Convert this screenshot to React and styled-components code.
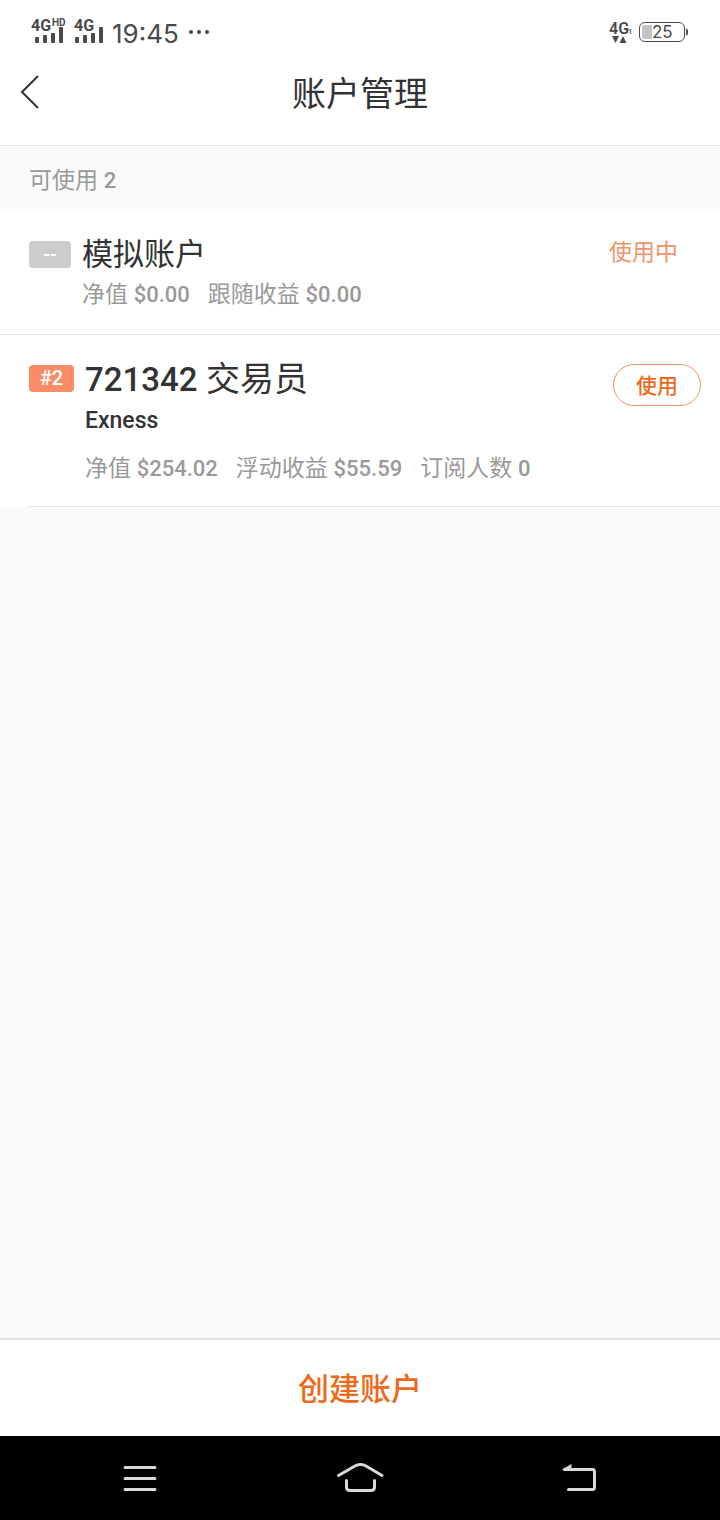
import React from 'react';
import styled, { createGlobalStyle } from 'styled-components';

const colors = {
  text: '#333333',
  muted: '#999999',
  status: '#4a4a4a',
  primary: '#ee6a1b',
  primarySoft: '#f0936c',
  badge: '#fb8c68',
  badgeMuted: '#cccccc',
  page: '#fafafa',
  line: '#e2e3e5',
  nav: '#d9d9d9',
};

const GlobalStyle = createGlobalStyle`
  * {
    box-sizing: border-box;
  }

  body {
    margin: 0;
    color: ${colors.text};
    background: ${colors.page};
    font-family: Roboto, 'Noto Sans CJK SC', sans-serif;
  }

  h1, h2, p {
    margin: 0;
    font-weight: 400;
  }

  button {
    padding: 0;
    border: 0;
    background: none;
    font-family: inherit;
    cursor: pointer;
  }

  svg {
    display: block;
  }
`;

const Screen = styled.div`
  display: flex;
  flex-direction: column;
  min-height: 100vh;
`;

const StatusBar = styled.div`
  display: flex;
  align-items: center;
  justify-content: space-between;
  height: 64px;
  padding: 0 31px;
  background: #fff;
`;

const StatusGroup = styled.div`
  display: flex;
  align-items: center;
  gap: ${({ $tight }) => ($tight ? '4px' : '8px')};
`;

const Clock = styled.span`
  font-family: Inter, sans-serif;
  font-size: 26px;
  line-height: 32px;
  padding-top: 4px;
  color: ${colors.status};
`;

const Header = styled.header`
  display: grid;
  grid-template-columns: 60px 1fr 60px;
  align-items: center;
  height: 82px;
  padding-bottom: 26px;
  border-bottom: 1px solid ${colors.line};
  background: #fff;
`;

const BackButton = styled.button`
  padding-left: 19px;
`;

const Title = styled.h1`
  padding-top: 4px;
  font-size: 34px;
  line-height: 48px;
  text-align: center;
`;

const Content = styled.main`
  flex: 1;
`;

const SectionLabel = styled.h2`
  padding: 18px 29px 14px;
  font-size: 23px;
  line-height: 33px;
  color: ${colors.muted};
`;

const Num = styled.span`
  font-size: 22px;
  font-weight: 500;
`;

const Account = styled.section`
  display: flex;
  align-items: flex-start;
  gap: 11px;
  padding: 24px 19px ${({ $compact }) => ($compact ? '18px' : '20px')} 29px;
  background: #fff;
`;

const Divider = styled.div`
  height: 1px;
  background: #fff;

  &::after {
    content: '';
    display: block;
    height: 1px;
    margin-left: ${({ $inset }) => ($inset ? '29px' : '0')};
    background: ${colors.line};
  }
`;

const Badge = styled.span`
  min-width: ${({ $muted }) => ($muted ? '42px' : '45px')};
  margin-top: 6px;
  border-radius: 4px;
  background: ${({ $muted }) => ($muted ? colors.badgeMuted : colors.badge)};
  color: #fff;
  font-size: 20px;
  font-weight: 500;
  line-height: 27px;
  text-align: center;
`;

const Info = styled.div`
  flex: 1;
`;

const Name = styled.p`
  font-size: ${({ $large }) => ($large ? '34px' : '31px')};
  line-height: 40px;
`;

const AccountNumber = styled.span`
  font-size: 33px;
  font-weight: 500;
`;

const Broker = styled.p`
  padding-bottom: 7px;
  font-size: 23px;
  font-weight: 500;
  line-height: 42px;
`;

const Stats = styled.p`
  display: flex;
  flex-wrap: wrap;
  gap: 18px;
  font-size: 23px;
  line-height: 39px;
  color: ${colors.muted};
`;

const InUse = styled.span`
  padding-right: 23px;
  font-size: 23px;
  line-height: 36px;
  color: ${colors.primarySoft};
`;

const UseButton = styled.button`
  width: 88px;
  height: 42px;
  margin-top: 5px;
  padding-bottom: 2px;
  border: 1px solid ${colors.primarySoft};
  border-radius: 21px;
  color: ${colors.primary};
  font-size: 21px;
  font-weight: 500;
`;

const CreateButton = styled.button`
  && {
    height: 98px;
    padding-bottom: 4px;
    border-top: 2px solid ${colors.line};
    background: #fff;
    color: ${colors.primary};
    font-size: 31px;
    font-weight: 500;
  }
`;

const NavBar = styled.nav`
  display: grid;
  grid-template-columns: repeat(3, 1fr);
  height: 84px;
  padding: 0 30px;
  background: #000;
`;

const NavButton = styled.button`
  display: flex;
  align-items: center;
  justify-content: center;
`;

const Signal = ({ hd }) => (
  <svg width={hd ? 35 : 30} height="30" fill={colors.status} fontFamily="Roboto, sans-serif" fontWeight="700">
    <text x="0" y="14" fontSize="16">4G</text>
    {hd && <text x="21" y="9" fontSize="10">HD</text>}
    <rect x={hd ? 4 : 1} y="20" width="4" height="6" rx="1" />
    <rect x={hd ? 12 : 9} y="18" width="4" height="8" rx="1" />
    <rect x={hd ? 20 : 17} y="16" width="4" height="10" rx="1" />
    <rect x={hd ? 28 : 25} y="10" width="4" height="16" rx="1" />
  </svg>
);

const More = () => (
  <svg width="24" height="6" fill={colors.status}>
    <circle cx="4" cy="3" r="2" />
    <circle cx="12" cy="3" r="2" />
    <circle cx="20" cy="3" r="2" />
  </svg>
);

const DataIcon = () => (
  <svg width="26" height="26" fill={colors.status} fontFamily="Roboto, sans-serif">
    <text x="0" y="15" fontSize="16" fontWeight="600">4G</text>
    <text x="19" y="15" fontSize="8" fontWeight="500">1</text>
    <path d="M3 17h7l-3.500 7zM10.500 24h7l-3.500-7z" />
  </svg>
);

const Battery = () => (
  <svg width="50" height="22" fill="none">
    <rect x="0.500" y="1.500" width="45" height="19" rx="5.500" stroke={colors.status} />
    <path d="M47 7.500q2 0 2 3.500t-2 3.500z" fill={colors.status} />
    <path d="M5 4h8v14H5a2 2 0 0 1-2-2V6a2 2 0 0 1 2-2z" fill="#c4c4c4" />
    <text x="13" y="17" fontFamily="Inter, sans-serif" fontSize="17" fill={colors.status}>25</text>
  </svg>
);

const BackIcon = () => (
  <svg width="22" height="36" fill="none" stroke={colors.text} strokeWidth="2">
    <path d="M19 2L3 18l16 16" />
  </svg>
);

const MenuIcon = () => (
  <svg width="34" height="28" fill="none" stroke={colors.nav} strokeWidth="3" strokeLinecap="round">
    <path d="M2 3.500h30M2 14.500h30M2 25.500h30" />
  </svg>
);

const HomeIcon = () => (
  <svg width="48" height="30" fill="none" stroke={colors.nav} strokeWidth="3" strokeLinecap="round">
    <path d="M2.500 12.500L19 3q5.500-3 11 0l16 9.500" />
    <path d="M10.500 17.500v6.500q0 3.500 3.500 3.500h21q3.500 0 3.500-3.500v-6.500" />
  </svg>
);

const ReturnIcon = () => (
  <svg width="36" height="30" fill="none" stroke={colors.nav} strokeWidth="3" strokeLinecap="round">
    <path d="M2.500 6.500h28q2 0 2 2.500v15q0 2.500-2 2.500H6.500" />
    <path d="M0 6.500L9.500 1v6H1z" fill={colors.nav} stroke="none" />
  </svg>
);

const Stat = ({ label, value }) => (
  <span>
    {label} <Num>{value}</Num>
  </span>
);

const App = () => (
  <>
    <GlobalStyle />
    <Screen>
      <StatusBar>
        <StatusGroup>
          <Signal hd />
          <Signal />
          <Clock>19:45</Clock>
          <More />
        </StatusGroup>
        <StatusGroup $tight>
          <DataIcon />
          <Battery />
        </StatusGroup>
      </StatusBar>
      <Header>
        <BackButton aria-label="返回">
          <BackIcon />
        </BackButton>
        <Title>账户管理</Title>
      </Header>
      <Content>
        <SectionLabel>
          可使用 <Num>2</Num>
        </SectionLabel>
        <Account>
          <Badge $muted>--</Badge>
          <Info>
            <Name>模拟账户</Name>
            <Stats>
              <Stat label="净值" value="$0.00" />
              <Stat label="跟随收益" value="$0.00" />
            </Stats>
          </Info>
          <InUse>使用中</InUse>
        </Account>
        <Divider />
        <Account $compact>
          <Badge>#2</Badge>
          <Info>
            <Name $large>
              <AccountNumber>721342</AccountNumber> 交易员
            </Name>
            <Broker>Exness</Broker>
            <Stats>
              <Stat label="净值" value="$254.02" />
              <Stat label="浮动收益" value="$55.59" />
              <Stat label="订阅人数" value="0" />
            </Stats>
          </Info>
          <UseButton>使用</UseButton>
        </Account>
        <Divider $inset />
      </Content>
      <CreateButton>创建账户</CreateButton>
      <NavBar>
        <NavButton aria-label="菜单">
          <MenuIcon />
        </NavButton>
        <NavButton aria-label="主页">
          <HomeIcon />
        </NavButton>
        <NavButton aria-label="后退">
          <ReturnIcon />
        </NavButton>
      </NavBar>
    </Screen>
  </>
);

export default App;
